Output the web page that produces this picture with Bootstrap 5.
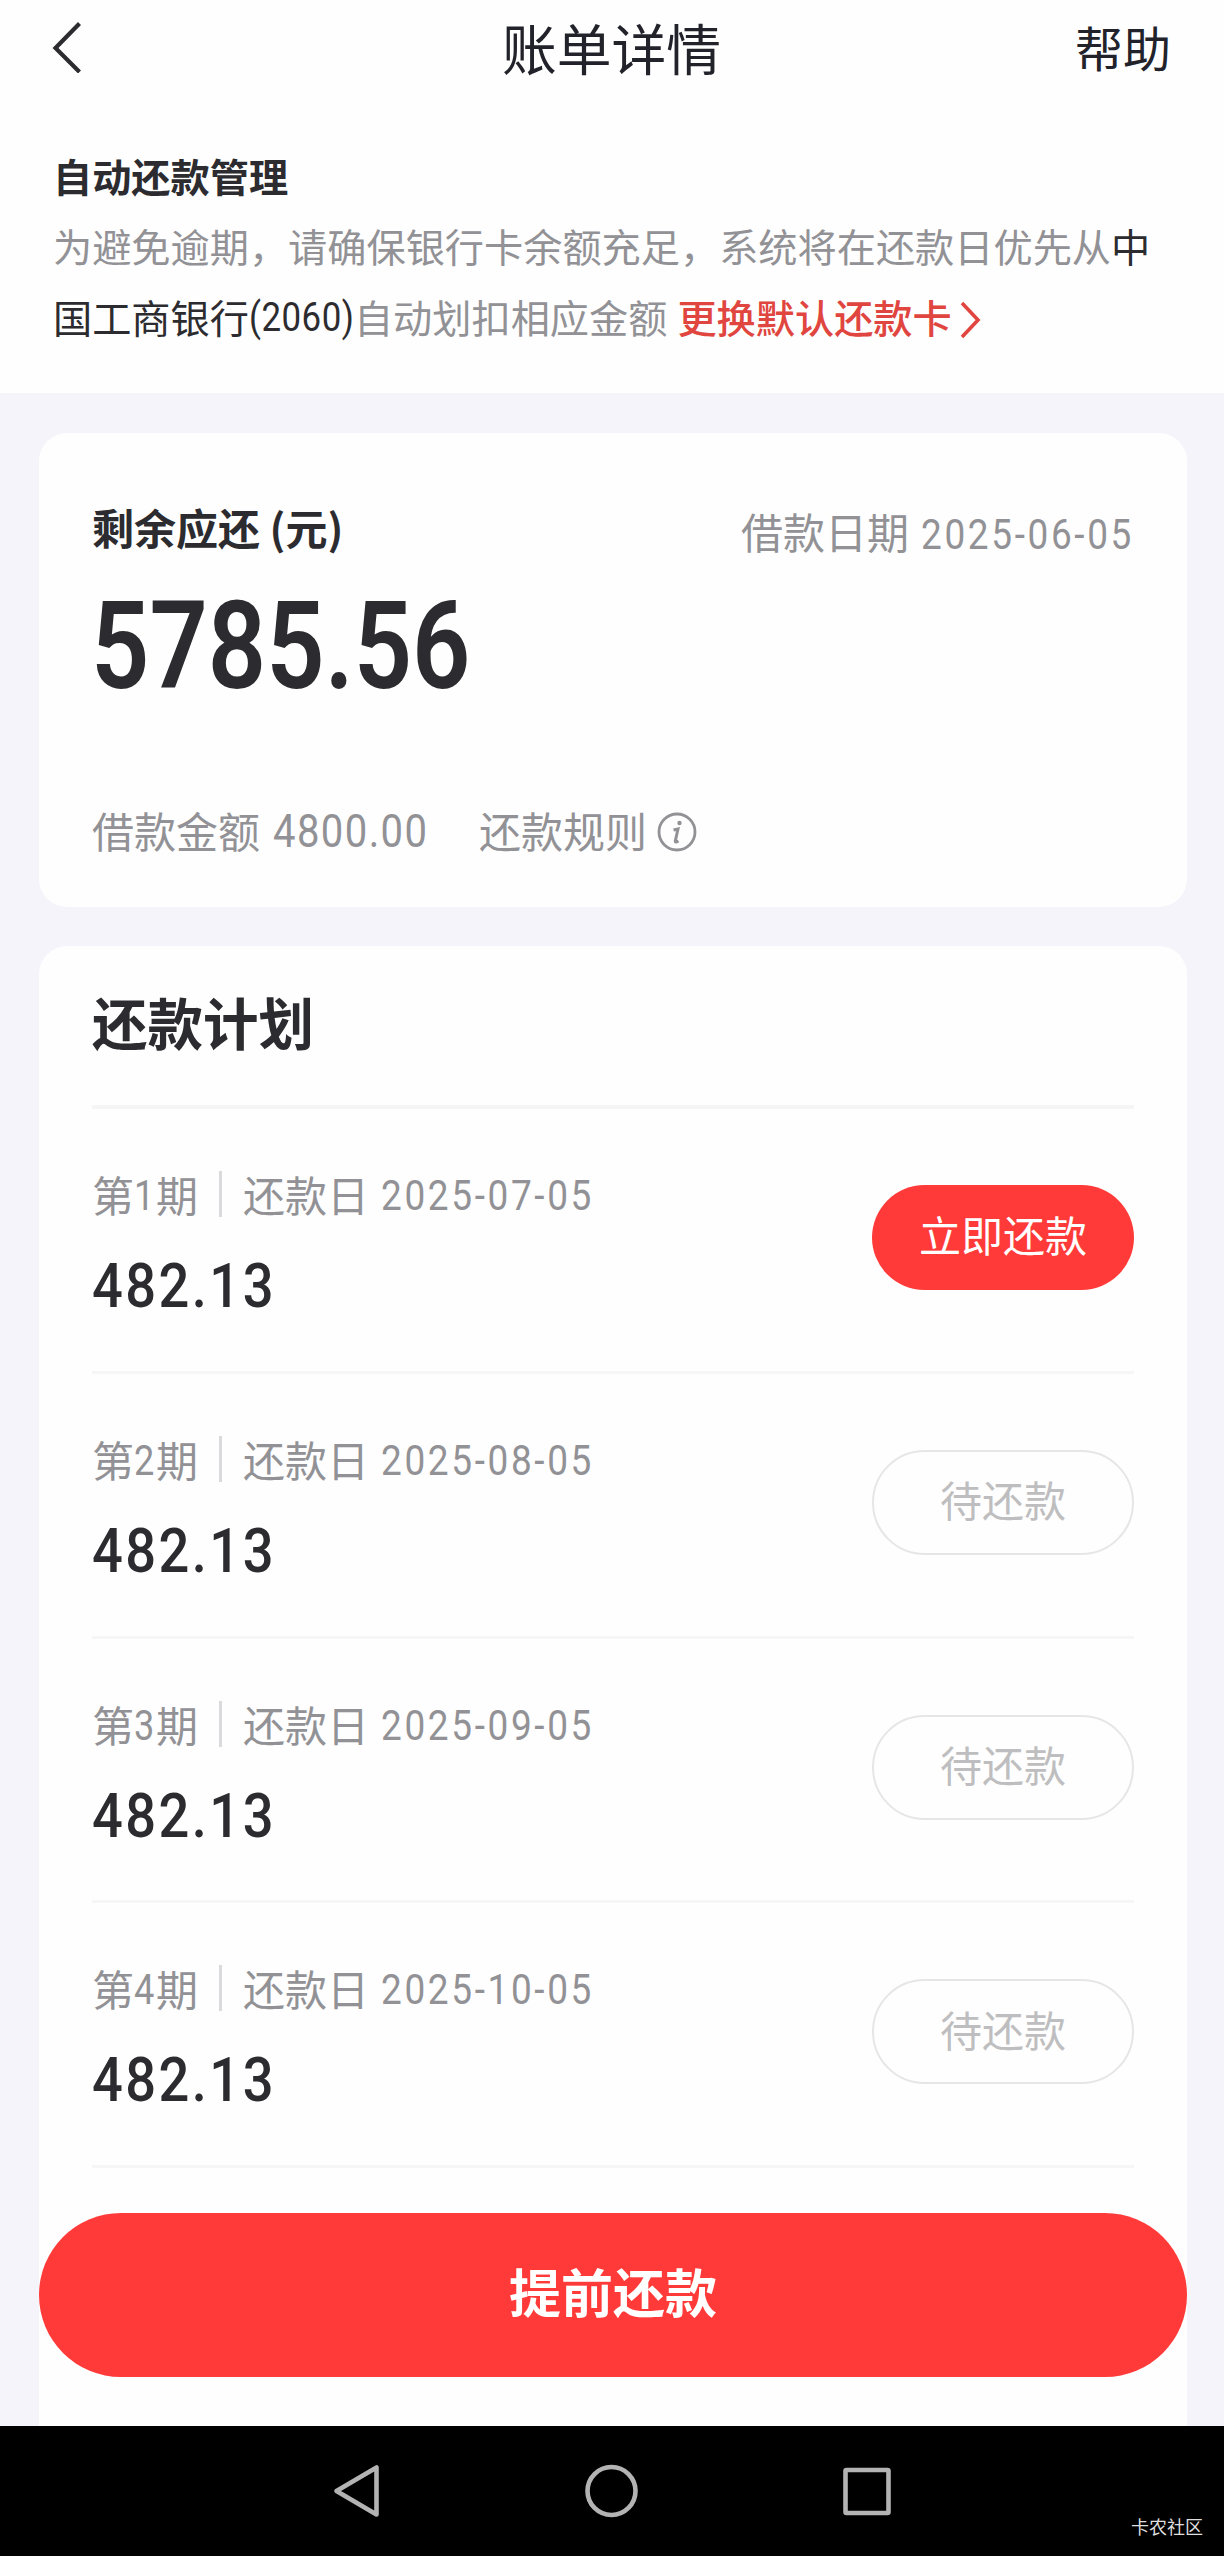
<!DOCTYPE html>
<html lang="zh-CN">
<head>
<meta charset="utf-8">
<meta name="viewport" content="width=device-width, initial-scale=1">
<title>账单详情</title>
<link href="https://cdn.jsdelivr.net/npm/bootstrap@5.3.0/dist/css/bootstrap.min.css" rel="stylesheet">
<style>
  body { width: 1224px; height: 2556px; background: #f4f4fa; color: #2c2c30; font-family: "Noto Sans CJK SC", sans-serif; font-size: 42px; line-height: 60px; overflow: hidden; }
  svg { display: block; flex: none; }
  .paper { background: #fefefe; }
  .soft { color: #929296; }
  .ink { color: #2c2c30; }
  .topbar { height: 93px; padding: 0 53px 0 52px; color: #22222a; }
  .topbar .side { width: 200px; font-size: 48px; line-height: 70px; padding-bottom: 1px; }
  .topbar h1 { font-size: 54.8px; font-weight: 400; line-height: 93px; }
  .notice { height: 300px; padding: 48px 52px 0 53px; font-size: 39.2px; line-height: 70.6px; white-space: nowrap; }
  .notice h2 { font-size: 39.2px; line-height: 69px; }
  .notice .swap { color: #e0463f; margin-left: 10px; font-weight: 500; text-decoration: none; }
  .notice .swap svg { display: inline-block; vertical-align: -6px; margin-left: 6px; }
  .num { font-family: Roboto, "Noto Sans CJK SC", sans-serif; display: inline-block; transform-origin: left center; white-space: nowrap; }
  .tail { width: 105px; line-height: 60px; }
  .tail .num { transform: scaleX(.86); letter-spacing: .6px; font-size: 40.5px; line-height: 60px; }
  .panel { margin: 0 37px 0 39px; border-radius: 28px; }
  .summary { margin-top: 40px; height: 474px; padding: 64px 53px 0; }
  .total { font-size: 122px; font-weight: 600; line-height: 120px; height: 120px; margin-top: 10px; margin-left: -1px; }
  .total .num { transform: scaleX(.838); }
  .date { width: 211px; margin-left: 12px; }
  .date .num { transform: scaleX(.88); font-size: 42px; letter-spacing: 3px; }
  .summary .date { width: 213px; }
  .loanline { margin-top: 103px; }
  .loan { width: 157px; margin-left: 13px; padding-top: 1px; }
  .loan .num { transform: scaleX(.88); font-size: 45.5px; letter-spacing: 1.6px; }
  .rule { margin: 0 10px 0 49px; }
  .loanline svg { margin-top: 4px; }
  .plan { margin-top: 39px; height: 1480px; border-radius: 28px 28px 0 0; padding: 0 53px; }
  .plan h2 { font-size: 55.5px; line-height: 80px; height: 163px; padding-top: 35px; border-bottom: 4px solid #f5f5f6; }
  .term { height: 264.8px; padding-top: 53px; border-bottom: 3px solid #f6f6f7; }
  .term .idx { width: 22px; }
  .term .idx .num { transform: scaleX(.86); }
  .bar { width: 3px; height: 46px; background: #dadadd; margin: 0 21px 0 21px; }
  .amount { font-size: 62px; font-weight: 500; line-height: 70px; margin-top: 19px; }
  .amount .num { transform: scaleX(.875); letter-spacing: 2.8px; }
  .pill { width: 262px; height: 105px; border-radius: 53px; font-size: 42px; line-height: 60px; padding: 0 0 7px; margin-top: 23px; border: 0; }
  .pill-on, .payall { background: #ff3a38; color: #fff; }
  .pill-off { border: 2px solid #e6e6e8; color: #bebec0; padding-bottom: 6px; }
  .payall { margin: 45px -53px 0; width: 1148px; height: 164px; border-radius: 82px; border: 0; padding: 0 0 9px; font-size: 52px; font-weight: 700; line-height: 80px; }
  .sysbar { height: 130px; background: #000; position: relative; padding-left: 333px; }
  .stamp { position: absolute; right: 21px; bottom: 15px; font-size: 18px; line-height: 30px; color: #dedede; }
</style>
<script src="https://cdn.jsdelivr.net/npm/bootstrap@5.3.0/dist/js/bootstrap.bundle.min.js"></script>
</head>
<body>
<div class="d-flex flex-column h-100">
  <header class="paper topbar d-flex align-items-center justify-content-between">
    <div class="side"><svg width="32" height="54" viewBox="0 0 32 54" fill="none" stroke="#2c2c30" stroke-width="4.2"><path d="M27.500 4.500 L3.500 29 L27.500 53"/></svg></div>
    <h1 class="m-0">账单详情</h1>
    <div class="side text-end">帮助</div>
  </header>

  <section class="paper notice">
    <h2 class="fw-bold m-0">自动还款管理</h2>
    <div class="soft">为避免逾期，请确保银行卡余额充足，系统将在还款日优先从<span class="ink">中</span></div>
    <div class="d-flex align-items-center soft"><span class="ink">国工商银行</span><span class="tail ink"><span class="num">(2060)</span></span>自动划扣相应金额<a class="swap" href="#">更换默认还款卡<svg width="24" height="38" viewBox="0 0 24 38" fill="none" stroke="#e0463f" stroke-width="3.6"><path d="M4 2 L20 19 L4 36"/></svg></a></div>
  </section>

  <section class="paper panel summary">
    <div class="d-flex justify-content-between">
      <div class="fw-bold">剩余应还 (元)</div>
      <div class="d-flex soft pt-1"><span>借款日期</span><span class="date"><span class="num">2025-06-05</span></span></div>
    </div>
    <div class="total"><span class="num">5785.56</span></div>
    <div class="d-flex align-items-center soft loanline">
      <span>借款金额</span><span class="loan"><span class="num">4800.00</span></span>
      <span class="rule">还款规则</span>
      <svg width="40" height="40" viewBox="0 0 40 40" fill="none" stroke="#929296" stroke-width="2.800"><circle cx="20" cy="20" r="18"/><path d="M16.500 18 L21 17 L18.300 29 Q18 31 21.500 29" stroke-width="3"/><circle cx="22.500" cy="11" r="2.200" fill="#929296" stroke="none"/></svg>
    </div>
  </section>

  <section class="paper panel plan">
    <h2 class="fw-bold m-0">还款计划</h2>
    <div class="term d-flex justify-content-between">
      <div><div class="d-flex align-items-center soft">第<span class="idx"><span class="num">1</span></span>期<span class="bar"></span>还款日<span class="date"><span class="num">2025-07-05</span></span></div>
      <div class="amount"><span class="num">482.13</span></div></div>
      <button class="btn pill pill-on">立即还款</button>
    </div>
    <div class="term d-flex justify-content-between">
      <div><div class="d-flex align-items-center soft">第<span class="idx"><span class="num">2</span></span>期<span class="bar"></span>还款日<span class="date"><span class="num">2025-08-05</span></span></div>
      <div class="amount"><span class="num">482.13</span></div></div>
      <button class="btn pill pill-off">待还款</button>
    </div>
    <div class="term d-flex justify-content-between">
      <div><div class="d-flex align-items-center soft">第<span class="idx"><span class="num">3</span></span>期<span class="bar"></span>还款日<span class="date"><span class="num">2025-09-05</span></span></div>
      <div class="amount"><span class="num">482.13</span></div></div>
      <button class="btn pill pill-off">待还款</button>
    </div>
    <div class="term d-flex justify-content-between">
      <div><div class="d-flex align-items-center soft">第<span class="idx"><span class="num">4</span></span>期<span class="bar"></span>还款日<span class="date"><span class="num">2025-10-05</span></span></div>
      <div class="amount"><span class="num">482.13</span></div></div>
      <button class="btn pill pill-off">待还款</button>
    </div>
    <button class="btn payall">提前还款</button>
  </section>

  <footer class="sysbar d-flex align-items-center">
    <svg width="558" height="56" viewBox="0 0 558 56" fill="none" stroke="#b3b3b3" stroke-width="4.600" stroke-linejoin="round"><path d="M3.500 28 L43.500 4.500 V51.500 Z"/><circle cx="278.500" cy="28" r="24"/><rect x="512.500" y="7" width="43" height="43" rx="1"/></svg>
    <span class="stamp">卡农社区</span>
  </footer>
</div>
</body>
</html>
